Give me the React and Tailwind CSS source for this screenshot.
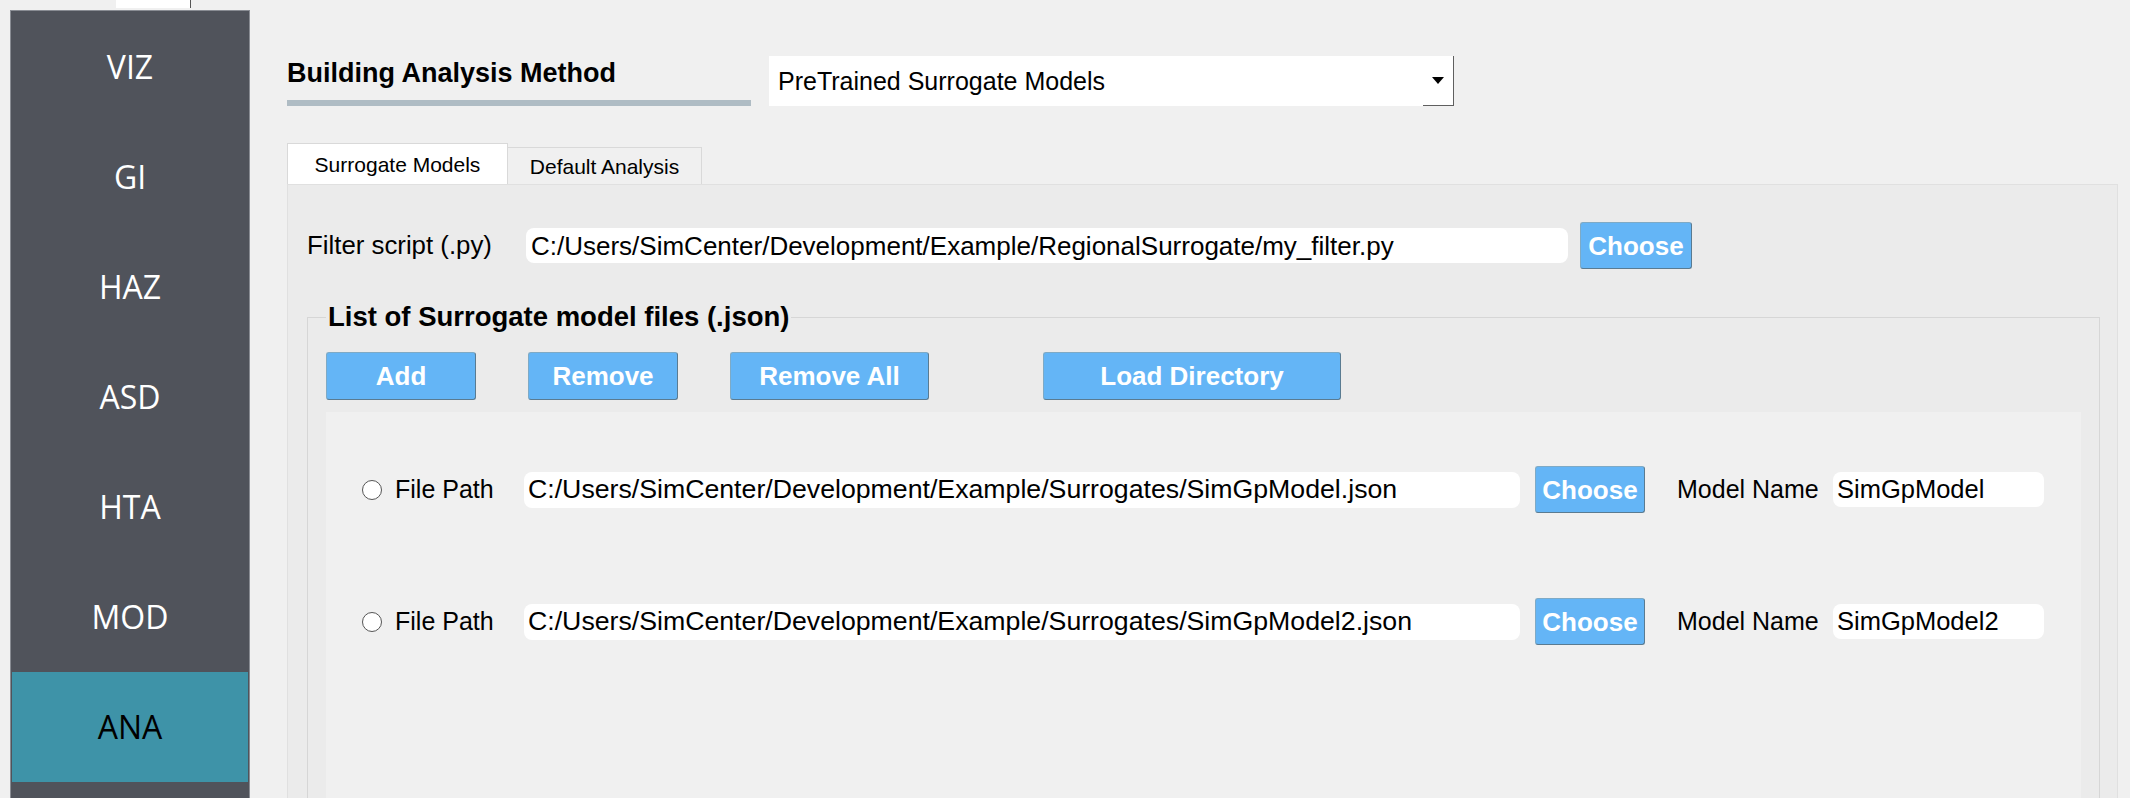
const NAV = ["VIZ", "GI", "HAZ", "ASD", "HTA", "MOD", "ANA"];

function BlueButton({ children, className }) {
  return (
    <div
      className={
        "flex shrink-0 items-center justify-center rounded-[3px] border border-[#7eaac6] border-r-[#5a7b91] border-b-[#5a7b91] bg-[#64b5f6] text-[26px] font-bold leading-none text-white " +
        className
      }
    >
      {children}
    </div>
  );
}

function ModelRow({ path, name }) {
  return (
    <div className="flex h-[47px] items-center">
      <div className="ml-[36px] h-[20px] w-[20px] shrink-0 rounded-full border border-[#555555] bg-white" />
      <span className="ml-[13px] w-[129px] shrink-0 text-[25px] leading-none">File Path</span>
      <div className="flex h-[36px] w-[996px] shrink-0 items-center overflow-hidden whitespace-nowrap rounded-[8px] bg-white pl-[4px] text-[26.7px] leading-none">
        {path}
      </div>
      <BlueButton className="ml-[15px] h-[47px] w-[110px]">Choose</BlueButton>
      <span className="ml-[32px] w-[156px] shrink-0 text-[25px] leading-none">Model Name</span>
      <div className="flex h-[35px] w-[211px] shrink-0 items-center rounded-[8px] bg-white pl-[4px] text-[25.5px] leading-none">
        {name}
      </div>
    </div>
  );
}

export default function App() {
  return (
    <div className="flex h-[798px] w-[2130px] overflow-hidden bg-[#f0f0f0] font-['Liberation_Sans',Arial,sans-serif] text-black">
      {/* Sidebar */}
      <div className="flex w-[250px] shrink-0 flex-col">
        <div className="h-[10px] shrink-0">
          <div className="ml-[116px] h-[8px] w-[75px] border-r border-[#555555] bg-white" />
        </div>
        <div className="ml-[10px] flex h-[820px] w-[240px] shrink-0 flex-col border border-[#898c93] bg-[#50535b] p-[1px] font-['Open_Sans',sans-serif]">
          {NAV.map((n) => (
            <div
              key={n}
              className={
                n === "ANA"
                  ? "flex h-[110px] shrink-0 items-center justify-center bg-[#3e93a8] text-[32px] text-black"
                  : "flex h-[110px] shrink-0 items-center justify-center text-[32px] text-white"
              }
            >
              {n}
            </div>
          ))}
        </div>
      </div>

      {/* Main */}
      <div className="flex flex-1 flex-col pl-[37px] pt-[56px]">
        {/* Header */}
        <div className="flex items-start">
          <div className="flex flex-col pt-[4px]">
            <div className="text-[27px] font-bold leading-[26px]">Building Analysis Method</div>
            <div className="mt-[14px] h-[6px] w-[464px] bg-[#afbcc4]" />
          </div>
          <div className="ml-[18px] flex h-[50px] w-[685px] items-center bg-white">
            <span className="pl-[9px] text-[25px] leading-none">PreTrained Surrogate Models</span>
            <div className="ml-auto flex h-full w-[31px] items-center justify-center border-r border-b border-[#5f5f5f]">
              <svg width="12" height="7" viewBox="0 0 12 7">
                <polygon points="0,0 12,0 6,7" fill="#000" />
              </svg>
            </div>
          </div>
        </div>

        {/* Tabs */}
        <div className="mt-[37px] flex items-end">
          <div className="flex h-[41px] w-[221px] items-center justify-center border border-b-0 border-[#d9d9d9] bg-white text-[21px] leading-none">
            Surrogate Models
          </div>
          <div className="flex h-[37px] w-[194px] items-center justify-center border-t border-r border-[#d9d9d9] bg-[#f0f0f0] text-[21px] leading-none">
            Default Analysis
          </div>
        </div>

        {/* Panel */}
        <div className="flex h-[720px] w-[1831px] shrink-0 flex-col border border-[#e0e0e0] bg-[#ebebeb]">
          {/* Filter row */}
          <div className="mt-[37px] flex h-[47px] items-center">
            <span className="ml-[19px] w-[219px] shrink-0 text-[25.8px] leading-none">Filter script (.py)</span>
            <div className="flex h-[35px] w-[1042px] shrink-0 items-center whitespace-nowrap rounded-[8px] bg-white pl-[5px] text-[26px] leading-none">
              C:/Users/SimCenter/Development/Example/RegionalSurrogate/my_filter.py
            </div>
            <BlueButton className="ml-[12px] h-[47px] w-[112px]">Choose</BlueButton>
          </div>

          {/* Group box */}
          <fieldset className="ml-[19px] mt-[33px] w-[1793px] border border-[#d6d6d6] px-[18px] pt-[20px]">
            <legend className="px-[2px] text-[27.5px] font-bold leading-[30px]">List of Surrogate model files (.json)</legend>
            <div className="flex h-[48px] items-stretch">
              <BlueButton className="w-[150px]">Add</BlueButton>
              <BlueButton className="ml-[52px] w-[150px]">Remove</BlueButton>
              <BlueButton className="ml-[52px] w-[199px]">Remove All</BlueButton>
              <BlueButton className="ml-[114px] w-[298px]">Load Directory</BlueButton>
            </div>
            <div className="mt-[12px] flex h-[440px] flex-col gap-[85px] bg-[#f0f0f0] pt-[54px]">
              <ModelRow
                path="C:/Users/SimCenter/Development/Example/Surrogates/SimGpModel.json"
                name="SimGpModel"
              />
              <ModelRow
                path="C:/Users/SimCenter/Development/Example/Surrogates/SimGpModel2.json"
                name="SimGpModel2"
              />
            </div>
          </fieldset>
        </div>
      </div>
    </div>
  );
}
